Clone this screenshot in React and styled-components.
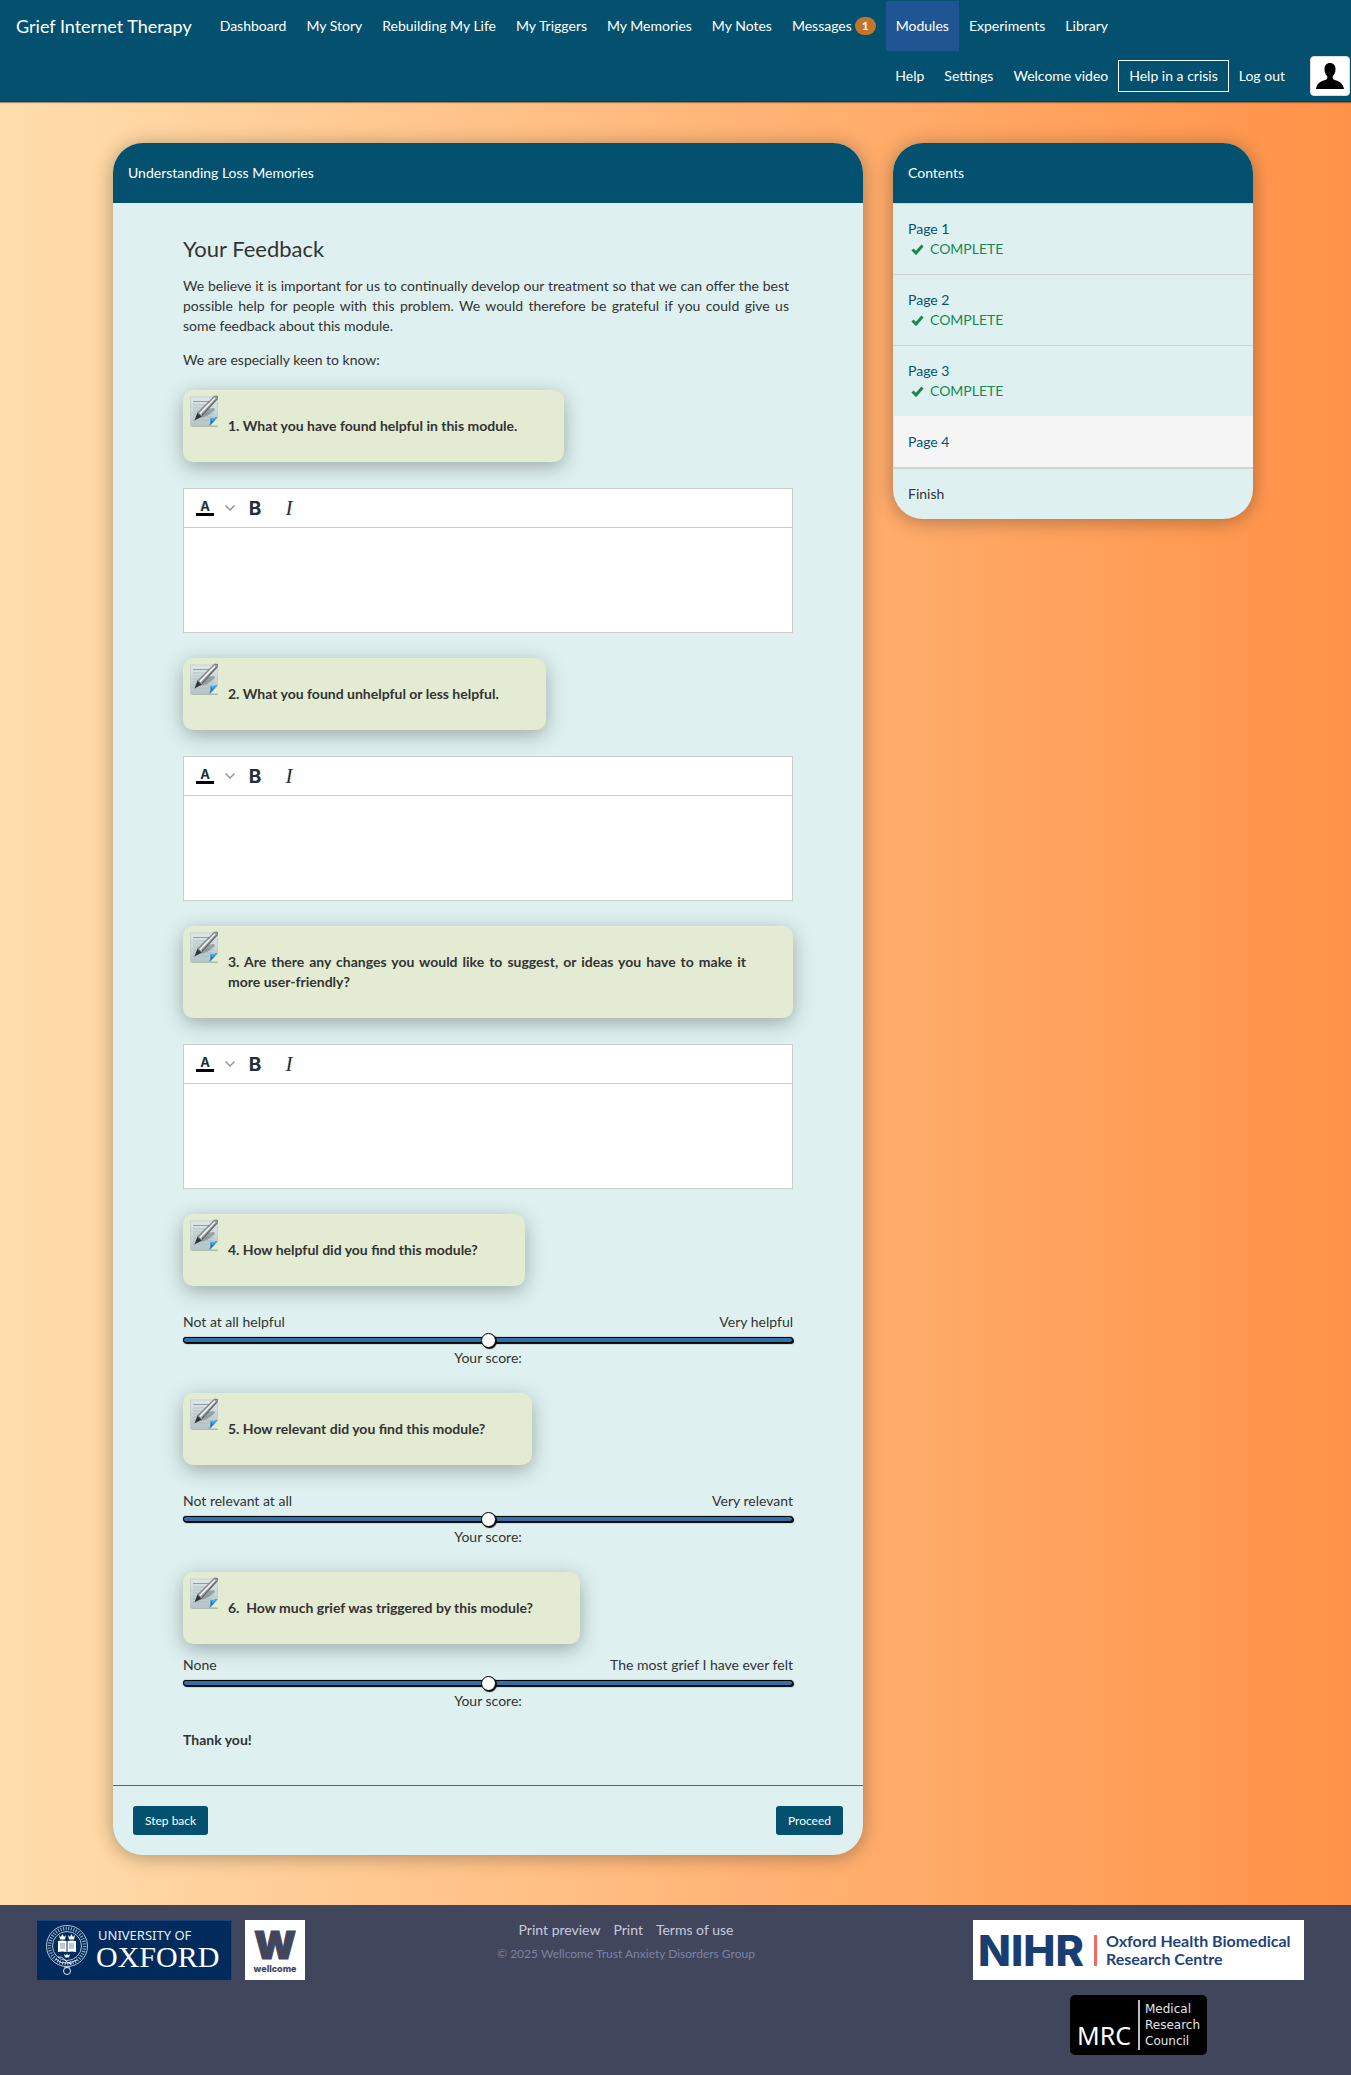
import React, { useState } from "react";
import styled, { createGlobalStyle } from "styled-components";

const teal = "#04516f";
const mint = "#def1f0";

const GlobalStyle = createGlobalStyle`
  *, *::before, *::after { box-sizing: border-box; }
  body {
    margin: 0;
    font-family: Lato, "Liberation Sans", sans-serif;
    font-size: 14px;
    line-height: 20px;
    color: #333;
    background: linear-gradient(to right, #ffdead, #ff9248);
  }
  button, textarea { font: inherit; }
`;

/* ---------- Top navigation ---------- */

const Header = styled.header`
  display: flex;
  flex-wrap: wrap;
  align-items: center;
  padding: 1px 1px 0 0;
  background: ${teal};
  border-bottom: 1px solid #03405a;
  box-shadow: 0 1px 1px rgba(0, 0, 0, 0.35);
`;

const Brand = styled.a`
  padding: 15px 18px 15px 16px;
  font-size: 18px;
  color: #fff;
  text-decoration: none;
`;

const NavList = styled.nav`
  display: flex;
  align-items: center;
  margin-left: ${(p) => (p.$end ? "auto" : "0")};
`;

const NavLink = styled.a`
  display: flex;
  align-items: center;
  height: 50px;
  padding: 0 10px;
  color: #fff;
  text-decoration: none;
  background: ${(p) => (p.$active ? "#1f5593" : "transparent")};
`;

const CrisisLink = styled(NavLink)`
  height: 32px;
  border: 1px solid #fff;
`;

const Badge = styled.span`
  margin-left: 3px;
  padding: 0 7px;
  border-radius: 10px;
  background: #c5752a;
  font-size: 12px;
  line-height: 18px;
  font-weight: 700;
`;

const Avatar = styled.a`
  display: flex;
  align-items: center;
  justify-content: center;
  width: 40px;
  height: 40px;
  margin-left: 15px;
  border: 1px solid #ddd;
  border-radius: 4px;
  background: #fff;
`;

/* ---------- Page layout ---------- */

const Page = styled.main`
  display: grid;
  grid-template-columns: 25fr 12fr;
  gap: 30px;
  align-items: start;
  padding: 41px 98px 50px 113px;
`;

const Panel = styled.section`
  border-radius: 30px;
  overflow: hidden;
  background: ${mint};
  box-shadow: 0 2px 20px rgba(0, 0, 0, 0.32);
`;

const PanelHeader = styled.header`
  padding: 20px 15px;
  background: ${teal};
  color: #fff;
`;

const PanelBody = styled.div`
  display: flex;
  flex-direction: column;
  padding: 34px 70px 35px;
`;

const Title = styled.h1`
  margin: 0 0 15px;
  font-size: 22px;
  line-height: 24px;
  font-weight: 400;
`;

const Paragraph = styled.p`
  margin: 0 0 14px;
  padding-right: 4px;
  text-align: justify;
`;

const Intro = styled.p`
  margin: 0 0 20px;
`;

const Question = styled.div`
  display: flex;
  flex-direction: column;
  align-items: flex-start;
  gap: ${(p) => (p.$tight ? 11 : 26)}px;
  margin-bottom: 25px;
`;

const Note = styled.label`
  position: relative;
  padding: 26px 47px 26px 45px;
  border-radius: 10px;
  background: #e3ebd3;
  box-shadow: 0 5px 20px rgba(0, 0, 0, 0.3);
  font-weight: 700;
  text-align: justify;
  white-space: pre-wrap;
`;

const NoteIcon = styled.svg`
  position: absolute;
  left: 5px;
  top: 5px;
  width: 32px;
  height: 32px;
`;

const Editor = styled.div`
  width: 100%;
  border: 1px solid #ccc;
  background: #fff;
`;

const Toolbar = styled.div`
  display: flex;
  align-items: center;
  height: 39px;
  padding: 0 4px;
  border-bottom: 1px solid #ccc;
`;

const Tool = styled.button`
  display: flex;
  align-items: center;
  justify-content: center;
  width: ${(p) => (p.$narrow ? 16 : 34)}px;
  height: 34px;
  padding: 0;
  border: 0;
  background: none;
  color: #222f3e;
`;

const TextArea = styled.textarea`
  display: block;
  width: 100%;
  height: 104px;
  padding: 10px;
  border: 0;
  outline: 0;
  resize: none;
  background: transparent;
`;

const Scale = styled.div`
  width: 100%;
`;

const ScaleEnds = styled.div`
  display: flex;
  justify-content: space-between;
`;

const Range = styled.input`
  appearance: none;
  display: block;
  width: 100%;
  height: 16px;
  margin: 0;
  background: transparent;

  &::-webkit-slider-runnable-track {
    height: 6px;
    border: 1px solid #010101;
    border-radius: 3px;
    background: #3071a9;
    box-shadow: 1px 1px 1px #000, 0 0 1px #0d0d0d;
  }
  &::-webkit-slider-thumb {
    appearance: none;
    width: 15px;
    height: 15px;
    margin-top: -5px;
    border: 1px solid #000;
    border-radius: 50%;
    background: #fff;
    box-shadow: 1px 1px 1px #000;
  }
`;

const Score = styled.output`
  display: block;
  text-align: center;
`;

const Thanks = styled.strong`
  margin-top: -6px;
`;

const PanelFooter = styled.footer`
  display: flex;
  justify-content: space-between;
  padding: 20px;
  border-top: 1px solid #2a71ad;
`;

const Action = styled.button`
  height: 29px;
  padding: 0 12px;
  border: 0;
  border-radius: 3px;
  background: ${teal};
  color: #fff;
  font-size: 12px;
`;

/* ---------- Contents ---------- */

const ContentsItem = styled.a`
  display: block;
  padding: 15px;
  border-top: 1px solid ${(p) => (p.$active ? "#f5f5f5" : "#d3d3d3")};
  background: ${(p) => (p.$active ? "#f5f5f5" : "transparent")};
  color: ${teal};
  text-decoration: none;
`;

const Finish = styled.div`
  padding: 15px;
  border-top: 2px solid #d3d3d3;
`;

const Complete = styled.span`
  display: flex;
  align-items: center;
  gap: 6px;
  padding-left: 3px;
  color: #198754;
`;

/* ---------- Site footer ---------- */

const SiteFooter = styled.footer`
  display: flex;
  align-items: flex-start;
  padding: 15px 47px 20px 37px;
  background: #42465c;
`;

const Logos = styled.div`
  display: flex;
  flex-direction: ${(p) => (p.$column ? "column" : "row")};
  align-items: center;
  gap: ${(p) => (p.$column ? 15 : 13)}px;
`;

const Legal = styled.div`
  flex: 1;
  margin-right: 26px;
  text-align: center;
`;

const LegalLinks = styled.div`
  display: flex;
  justify-content: center;
  gap: 13px;
`;

const LegalLink = styled.a`
  color: #c6cbdf;
  text-decoration: none;
`;

const Copyright = styled.div`
  margin-top: 4px;
  font-size: 12px;
  color: #7d83a5;
`;

const Logo = styled.svg`
  display: block;
`;

function NotepadIcon() {
  return (
    <NoteIcon viewBox="0 0 32 32" aria-hidden="true">
      <defs>
        <linearGradient id="paper" x1="0" y1="0" x2="0" y2="1">
          <stop offset="0" stopColor="#dfe7e9" />
          <stop offset="1" stopColor="#b3c3c7" />
        </linearGradient>
      </defs>
      <path d="M3 30.500h27v1.500H4z" fill="#8d978a" opacity=".6" />
      <path d="M2.500 2h27v21l-7.500 8h-19.500z" fill="url(#paper)" stroke="#b9c5c7" strokeWidth=".6" />
      <path d="M5 6.500h18" stroke="#8f9ea2" strokeWidth="1" />
      <path d="M5 10h14M5 13h11M5 16h9M5 19h21M5 22h20M5 25h16" stroke="#a9b8bc" strokeWidth=".7" />
      <path d="M9 24l10-10 7-1 1 2-8 6z" fill="#5f6b6f" opacity=".5" />
      <path d="M21.500 31q1.500-4 1-8 3 .5 7-1z" fill="#1573c0" />
      <path d="M22.500 23q3 .5 7-1l-5 4z" fill="#37b7ee" />
      <path d="M6.500 25.500l3-8 4 4z" fill="#2f3334" />
      <path d="M9.500 18L26.500 1l3 .5-.5 3L13.500 21.500z" fill="#a3a9ab" stroke="#4b5152" strokeWidth=".7" />
      <path d="M12 18.500L27 3" stroke="#fff" strokeWidth="1.200" />
      <path d="M14 20L28.500 4" stroke="#4b5152" strokeWidth=".8" />
    </NoteIcon>
  );
}

function TickIcon() {
  return (
    <svg width="13" height="12" viewBox="0 0 13 12" aria-hidden="true">
      <path d="M1.500 6.500L5 10l6.500-7.500" fill="none" stroke="currentColor" strokeWidth="3" />
    </svg>
  );
}

function RichEditor({ id }) {
  return (
    <Editor>
      <Toolbar>
        <Tool type="button" aria-label="Text colour">
          <svg width="24" height="24" viewBox="0 0 24 24">
            <text x="12" y="15" textAnchor="middle" fontFamily="Inter, sans-serif" fontWeight="700" fontSize="13" fill="currentColor">A</text>
            <path d="M3 17h18v3H3z" fill="#000" />
          </svg>
        </Tool>
        <Tool type="button" $narrow aria-label="Choose colour">
          <svg width="12" height="12" viewBox="0 0 12 12">
            <path d="M1.500 3.500L6 8l4.500-4.500" fill="none" stroke="#8f969e" strokeWidth="1.500" />
          </svg>
        </Tool>
        <Tool type="button" aria-label="Bold">
          <svg width="24" height="24" viewBox="0 0 24 24">
            <text x="12" y="19" textAnchor="middle" fontFamily="Inter, sans-serif" fontWeight="700" fontSize="19" fill="currentColor">B</text>
          </svg>
        </Tool>
        <Tool type="button" aria-label="Italic">
          <svg width="24" height="24" viewBox="0 0 24 24">
            <text x="12" y="19" textAnchor="middle" fontFamily="Liberation Serif, serif" fontStyle="italic" fontSize="21" fill="currentColor">I</text>
          </svg>
        </Tool>
      </Toolbar>
      <TextArea id={id} />
    </Editor>
  );
}

function RatingScale({ id, low, high }) {
  const [value, setValue] = useState(50);
  return (
    <Scale>
      <ScaleEnds>
        <span>{low}</span>
        <span>{high}</span>
      </ScaleEnds>
      <Range id={id} type="range" min="0" max="100" value={value} onChange={(e) => setValue(e.target.value)} />
      <Score htmlFor={id}>Your score:</Score>
    </Scale>
  );
}

function OxfordLogo() {
  return (
    <Logo width="195" height="60" viewBox="0 0 195 60" role="img" aria-label="University of Oxford">
      <path d="M0 0h195v60H0z" fill="#1b447c" />
      <path d="M0 1h194v59H0z" fill="#002b5c" />
      <g fill="none" stroke="#dfe6ee">
        <circle cx="30" cy="26" r="20.500" strokeWidth=".8" />
        <circle cx="30" cy="26" r="14.500" strokeWidth=".8" />
        <circle cx="30" cy="26" r="17.500" strokeWidth="3.500" strokeDasharray="1 1.600" opacity=".75" />
        <circle cx="30" cy="51" r="3.500" />
        <path d="M27 47h6M19 39q5 5 11 4t10-3M21 37q4-1 7 3t7 4" />
      </g>
      <path d="M21 21q4-1 8.500 0v11q-4.500-1-8.500 0zM30.500 21q4.500-1 8.500 0v11q-4-1-8.500 0z" fill="#fff" />
      <path d="M23 24h5M23 26h5M23 28h5M32 24h5M32 26h5M32 28h5" stroke="#47678f" strokeWidth=".7" />
      <path d="M22 15l2 2 1.500-3 1.500 3 2-2-1 4.500h-5zM31 15l2 2 1.500-3 1.500 3 2-2-1 4.500h-5zM27 34l2 1.500 1-2 1 2 2-1.500-1 3.500h-4z" fill="#fff" />
      <text x="61" y="20" fontFamily="Noto Sans, sans-serif" fontSize="13" fill="#e8edf3">UNIVERSITY OF</text>
      <text x="59" y="47" fontFamily="Liberation Serif, serif" fontSize="30" fill="#fff">OXFORD</text>
    </Logo>
  );
}

function WellcomeLogo() {
  return (
    <Logo width="60" height="60" viewBox="0 0 60 60" role="img" aria-label="Wellcome">
      <path d="M0 0h60v60H0z" fill="#fff" />
      <text x="30" y="39" textAnchor="middle" fontFamily="Inter, sans-serif" fontWeight="900" fontSize="39" fill="#42465c" stroke="#42465c" strokeWidth="1">W</text>
      <text x="30" y="52" textAnchor="middle" fontFamily="Inter, sans-serif" fontWeight="800" fontSize="9" fill="#42465c">wellcome</text>
    </Logo>
  );
}

function NihrLogo() {
  return (
    <Logo width="331" height="60" viewBox="0 0 331 60" role="img" aria-label="NIHR Oxford Health Biomedical Research Centre">
      <path d="M0 0h331v60H0z" fill="#fff" />
      <text x="5" y="46" fontFamily="Inter, sans-serif" fontWeight="800" fontSize="43" fill="#193e72">NIHR</text>
      <path d="M121 15h3v31h-3z" fill="#ee6b5d" />
      <text x="133" y="27" fontFamily="Lato, sans-serif" fontWeight="700" fontSize="16" fill="#1f437b">Oxford Health Biomedical</text>
      <text x="133" y="45" fontFamily="Lato, sans-serif" fontWeight="700" fontSize="16" fill="#1f437b">Research Centre</text>
    </Logo>
  );
}

function MrcLogo() {
  return (
    <Logo width="137" height="60" viewBox="0 0 137 60" role="img" aria-label="MRC Medical Research Council">
      <rect width="137" height="60" rx="5" fill="#000" />
      <text x="7" y="50" fontFamily="Noto Sans, sans-serif" fontSize="25" fill="#fff">MRC</text>
      <path d="M68 5h2v50h-2z" fill="#bdbdbd" />
      <g fontFamily="DejaVu Sans, sans-serif" fontSize="12" fill="#e4e4e4">
        <text x="75" y="18">Medical</text>
        <text x="75" y="34">Research</text>
        <text x="75" y="50">Council</text>
      </g>
    </Logo>
  );
}

const mainLinks = ["Dashboard", "My Story", "Rebuilding My Life", "My Triggers", "My Memories", "My Notes", "Messages", "Modules", "Experiments", "Library"];

const questions = [
  { id: "q1", text: "1. What you have found helpful in this module." },
  { id: "q2", text: "2. What you found unhelpful or less helpful." },
  { id: "q3", text: "3. Are there any changes you would like to suggest, or ideas you have to make it more user-friendly?" },
  { id: "q4", text: "4. How helpful did you find this module?", low: "Not at all helpful", high: "Very helpful" },
  { id: "q5", text: "5. How relevant did you find this module?", low: "Not relevant at all", high: "Very relevant" },
  { id: "q6", text: "6.  How much grief was triggered by this module?", low: "None", high: "The most grief I have ever felt", tight: true },
];

export default function App() {
  return (
    <>
      <GlobalStyle />
      <Header>
        <Brand href="#">Grief Internet Therapy</Brand>
        <NavList aria-label="Main">
          {mainLinks.map((name) => (
            <NavLink key={name} href="#" $active={name === "Modules"}>
              {name}
              {name === "Messages" && <Badge>1</Badge>}
            </NavLink>
          ))}
        </NavList>
        <NavList $end aria-label="Account">
          <NavLink href="#">Help</NavLink>
          <NavLink href="#">Settings</NavLink>
          <NavLink href="#">Welcome video</NavLink>
          <CrisisLink href="#">Help in a crisis</CrisisLink>
          <NavLink href="#">Log out</NavLink>
          <Avatar href="#" aria-label="Profile">
            <svg width="28" height="28" viewBox="0 0 28 28">
              <path d="M14 1c3.500 0 5.500 2.500 5.500 6 0 3-1 5.500-2.700 7.200-.5 2.300.2 3 2 3.700 4 1.500 8 2.300 9.200 9.100H0c1.200-6.800 5.200-7.600 9.200-9.100 1.800-.7 2.500-1.400 2-3.700C9.500 12.500 8.500 10 8.500 7c0-3.500 2-6 5.500-6z" fill="#000" />
            </svg>
          </Avatar>
        </NavList>
      </Header>

      <Page>
        <Panel>
          <PanelHeader>Understanding Loss Memories</PanelHeader>
          <PanelBody>
            <Title>Your Feedback</Title>
            <Paragraph>
              We believe it is important for us to continually develop our treatment so that we can offer the best
              possible help for people with this problem. We would therefore be grateful if you could give us
              {" "}some feedback about this module.
            </Paragraph>
            <Intro>We are especially keen to know:</Intro>
            {questions.map((q) => (
              <Question key={q.id} $tight={q.tight}>
                <Note htmlFor={q.id}>
                  <NotepadIcon />
                  {q.text}
                </Note>
                {q.low ? <RatingScale id={q.id} low={q.low} high={q.high} /> : <RichEditor id={q.id} />}
              </Question>
            ))}
            <Thanks>Thank you!</Thanks>
          </PanelBody>
          <PanelFooter>
            <Action type="button">Step back</Action>
            <Action type="button">Proceed</Action>
          </PanelFooter>
        </Panel>

        <Panel as="aside">
          <PanelHeader>Contents</PanelHeader>
          {[1, 2, 3].map((n) => (
            <ContentsItem key={n} href="#">
              Page {n}
              <Complete>
                <TickIcon />
                COMPLETE
              </Complete>
            </ContentsItem>
          ))}
          <ContentsItem href="#" $active>Page 4</ContentsItem>
          <Finish>Finish</Finish>
        </Panel>
      </Page>

      <SiteFooter>
        <Logos>
          <OxfordLogo />
          <WellcomeLogo />
        </Logos>
        <Legal>
          <LegalLinks>
            <LegalLink href="#">Print preview</LegalLink>
            <LegalLink href="#">Print</LegalLink>
            <LegalLink href="#">Terms of use</LegalLink>
          </LegalLinks>
          <Copyright>© 2025 Wellcome Trust Anxiety Disorders Group</Copyright>
        </Legal>
        <Logos $column>
          <NihrLogo />
          <MrcLogo />
        </Logos>
      </SiteFooter>
    </>
  );
}
